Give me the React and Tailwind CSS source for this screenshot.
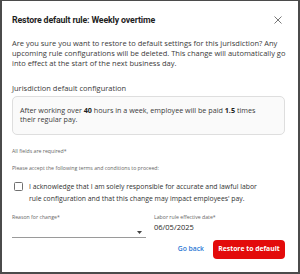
import React, { useState } from 'react';

const App = () => {
  const [checked, setChecked] = useState(false);

  return (
    <div className="w-[300px] h-[274px] bg-[#4b4b4b] pt-px px-[2px] pb-[2px] font-['Open_Sans',sans-serif]">
      <div className="bg-white h-full pl-[10px] pr-[13px] text-[#262626] whitespace-nowrap">
        {/* Header */}
        <div className="flex items-center justify-between pt-[12px] h-[26px]">
          <h1 className="font-['Roboto',sans-serif] text-[8.8px] leading-[14px] font-bold tracking-[-0.15px] text-[#1f1f1f]">
            Restore default rule: Weekly overtime
          </h1>
          <button className="w-[10px] h-[10px] flex items-center justify-center text-[#777] mr-[2px]">
            <svg width="8" height="8" viewBox="0 0 8 8" fill="none" stroke="currentColor" strokeWidth="1">
              <path d="M0.5 0.5 L7.5 7.5 M7.5 0.5 L0.5 7.5" />
            </svg>
          </button>
        </div>

        {/* Body */}
        <p className="mt-[11px] text-[7.5px] leading-[10px] text-[#3a3a3a]">
          Are you sure you want to restore to default settings for this jurisdiction? Any
          <br />
          upcoming rule configurations will be deleted. This change will automatically go
          <br />
          into effect at the start of the next business day.
        </p>

        <p className="mt-[14.5px] text-[7.5px] leading-[10px] text-[#3a3a3a]">
          Jurisdiction default configuration
        </p>

        <div className="mt-[3.5px] h-[39px] border border-[#dedede] rounded-[5px] bg-[#fafafa] px-[7px] pt-[8.5px] text-[7.2px] leading-[9.5px] text-[#3a3a3a]">
          After working over <b className="font-bold text-[#1e1e1e]">40</b> hours in a week, employee will be paid{' '}
          <b className="font-bold text-[#1e1e1e]">1.5</b> times
          <br />
          their regular pay.
        </div>

        <p className="mt-[12px] text-[5.2px] leading-[8px] text-[#666]">All fields are required*</p>
        <p className="mt-[8.5px] text-[5.2px] leading-[8px] text-[#666]">
          Please accept the following terms and conditions to proceed:
        </p>

        {/* Acknowledge */}
        <label className="mt-[9px] flex items-start gap-[6px] cursor-pointer">
          <span
            onClick={() => setChecked(!checked)}
            className="mt-[1px] ml-[2px] w-[9px] h-[9px] border border-[#707070] rounded-[1.5px] bg-white shrink-0 flex items-center justify-center"
          >
            {checked && (
              <svg width="7" height="7" viewBox="0 0 8 8" fill="none" stroke="#222" strokeWidth="1.2">
                <path d="M1 4 L3 6 L7 1.5" />
              </svg>
            )}
          </span>
          <span className="text-[6.85px] leading-[12px] text-[#333]">
            I acknowledge that I am solely responsible for accurate and lawful labor
            <br />
            rule configuration and that this change may impact employees' pay.
          </span>
        </label>

        {/* Fields */}
        <div className="mt-[8px] flex gap-[8px]">
          <div className="w-[134px]">
            <p className="text-[5.2px] leading-[8px] text-[#666]">Reason for change*</p>
            <div className="h-[16px] mt-[1px] border-b border-[#9a9a9a] flex items-end justify-end pr-[4px] pb-[3px]">
              <svg width="5" height="3" viewBox="0 0 5 3" fill="#444">
                <path d="M0 0 L5 0 L2.5 3 Z" />
              </svg>
            </div>
          </div>
          <div className="flex-1">
            <p className="text-[5.2px] leading-[8px] text-[#666]">Labor rule effective date*</p>
            <p className="mt-[1px] text-[7.5px] leading-[10px] text-[#262626]">06/05/2025</p>
          </div>
        </div>

        {/* Actions */}
        <div className="mt-[2.5px] flex items-center justify-end gap-[8px]">
          <button className="text-[6.8px] font-semibold text-[#2b78d4] px-[1px]">Go back</button>
          <button className="h-[19px] w-[72px] rounded-[4px] bg-[#e30b0b] text-white text-[6.8px] font-bold">
            Restore to default
          </button>
        </div>
      </div>
    </div>
  );
};

export default App;
